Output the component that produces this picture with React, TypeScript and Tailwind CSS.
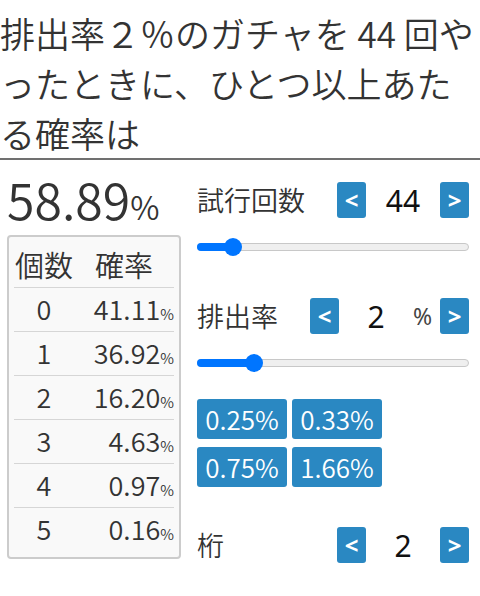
const jp = "font-['Noto_Sans_CJK_JP',sans-serif]";

const rows: [number, string][] = [
  [0, "41.11"],
  [1, "36.92"],
  [2, "16.20"],
  [3, "4.63"],
  [4, "0.97"],
  [5, "0.16"],
];

function StepButton({ children }: { children: string }) {
  return (
    <button className="flex h-[36px] w-[29px] items-center justify-center rounded-[3px] bg-[#2a88c2] font-['Noto_Sans',sans-serif] text-[24px] font-bold leading-none text-white">
      {children}
    </button>
  );
}

function Slider({ pct }: { pct: number }) {
  return (
    <div className="relative h-[18px] w-full">
      <div className="absolute left-0 right-0 top-[5px] h-[8px] rounded-full border border-[#c8c8c8] bg-[#efefef]" />
      <div
        className="absolute left-0 top-[5px] h-[8px] rounded-full bg-[#0075ff]"
        style={{ width: `${pct}%` }}
      />
      <div
        className="absolute top-0 h-[18px] w-[18px] rounded-full bg-[#0075ff]"
        style={{ left: `calc(${pct}% - 9px)` }}
      />
    </div>
  );
}

function Preset({ label }: { label: string }) {
  return (
    <button className={`flex h-[40px] w-[90px] items-center justify-center rounded-[3px] bg-[#2a88c2] ${jp} text-[26px] font-[350] leading-none text-white`}>
      {label}
    </button>
  );
}

export default function App() {
  return (
    <div className={`h-[596px] w-[480px] overflow-hidden bg-white font-[350] text-[#333] ${jp}`}>
      {/* question */}
      <h1 className="border-b-2 border-[#707070] pt-[8px] text-[35px] font-[350] leading-[50px] whitespace-nowrap">
        排出率２％のガチャを 44 回や
        <br />
        ったときに、ひとつ以上あた
        <br />
        る確率は
      </h1>

      <div className="flex gap-[16px] pl-[7px] pr-[11px]">
        {/* left: result + table */}
        <div className="w-[174px] shrink-0">
          <div className="mt-[13px] h-[50px] text-[50px] leading-[50px]">
            58.89<span className="text-[32px]">%</span>
          </div>
          <div className="mt-[12px] rounded-[4px] border-2 border-[#cccccc] bg-[#f9f9f9] px-[5px] py-[6px]">
            <div className="flex h-[44px] items-center text-[29px]">
              <span className="w-[60px] text-center">個数</span>
              <span className="flex-1 text-center">確率</span>
            </div>
            {rows.map(([n, p]) => (
              <div key={n} className="flex h-[44px] items-center border-t border-[#d6d6d6] text-[27px]">
                <span className="w-[60px] text-center">{n}</span>
                <span className="flex-1 text-right">
                  {p}
                  <span className="text-[15px]">%</span>
                </span>
              </div>
            ))}
          </div>
        </div>

        {/* right: controls */}
        <div className="flex-1">
          <div className="mt-[22px] flex h-[36px] items-center justify-between">
            <span className="text-[27px]">試行回数</span>
            <div className="flex items-center">
              <StepButton>&lt;</StepButton>
              <span className="w-[74px] text-center font-['Noto_Sans',sans-serif] text-[30px] font-normal text-[#111]">44</span>
              <StepButton>&gt;</StepButton>
            </div>
          </div>
          <div className="mt-[20px]">
            <Slider pct={13.2} />
          </div>

          <div className="mt-[42px] flex h-[36px] items-center justify-between">
            <span className="text-[27px]">排出率</span>
            <div className="flex items-center">
              <StepButton>&lt;</StepButton>
              <span className="w-[74px] text-center font-['Noto_Sans',sans-serif] text-[30px] font-normal text-[#111]">2</span>
              <span className="w-[27px] font-['Noto_Sans',sans-serif] text-[23px] font-normal text-[#444]">%</span>
              <StepButton>&gt;</StepButton>
            </div>
          </div>
          <div className="mt-[20px]">
            <Slider pct={21} />
          </div>

          <div className="mt-[27px] grid w-fit grid-cols-2 gap-x-[5px] gap-y-[8px]">
            <Preset label="0.25%" />
            <Preset label="0.33%" />
            <Preset label="0.75%" />
            <Preset label="1.66%" />
          </div>

          <div className="mt-[40px] flex h-[36px] items-center justify-between">
            <span className="text-[27px]">桁</span>
            <div className="flex items-center">
              <StepButton>&lt;</StepButton>
              <span className="w-[74px] text-center font-['Noto_Sans',sans-serif] text-[30px] font-normal text-[#111]">2</span>
              <StepButton>&gt;</StepButton>
            </div>
          </div>
        </div>
      </div>
    </div>
  );
}
